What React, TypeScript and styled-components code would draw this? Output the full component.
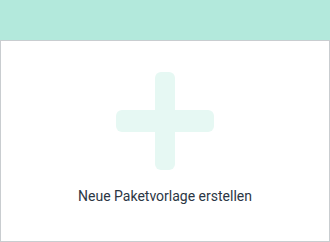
import React from 'react';
import styled, { createGlobalStyle } from 'styled-components';

const GlobalStyle = createGlobalStyle`
  html, body {
    margin: 0;
    padding: 0;
    background: #ffffff;
  }
  body {
    font-family: Roboto, "Liberation Sans", Arial, sans-serif;
  }
`;

const Card = styled('div')`
  width: 330px;
  height: 242px;
  display: flex;
  flex-direction: column;
  box-sizing: border-box;
`;

const Header = styled('div')`
  height: 40px;
  flex-shrink: 0;
  background: #b3e9dc;
`;

const Body = styled('button')`
  flex: 1;
  display: flex;
  flex-direction: column;
  align-items: center;
  padding: 31px 0 0;
  gap: 16px;
  border: 1px solid #c9cdd0;
  background: #ffffff;
  cursor: pointer;
  font: inherit;
`;

const Label = styled('span')`
  font-size: 14px;
  line-height: 20px;
  color: #2b3644;
`;

const PlusIcon: React.FC = () => (
  <svg width="98" height="98" viewBox="0 0 98 98">
    <rect x="39" y="0" width="20" height="98" rx="6" fill="#e6f8f3" />
    <rect x="0" y="38" width="98" height="22" rx="6" fill="#e6f8f3" />
  </svg>
);

const App: React.FC = () => {
  return (
    <>
      <GlobalStyle />
      <Card>
        <Header />
        <Body>
          <PlusIcon />
          <Label>Neue Paketvorlage erstellen</Label>
        </Body>
      </Card>
    </>
  );
};

export default App;
